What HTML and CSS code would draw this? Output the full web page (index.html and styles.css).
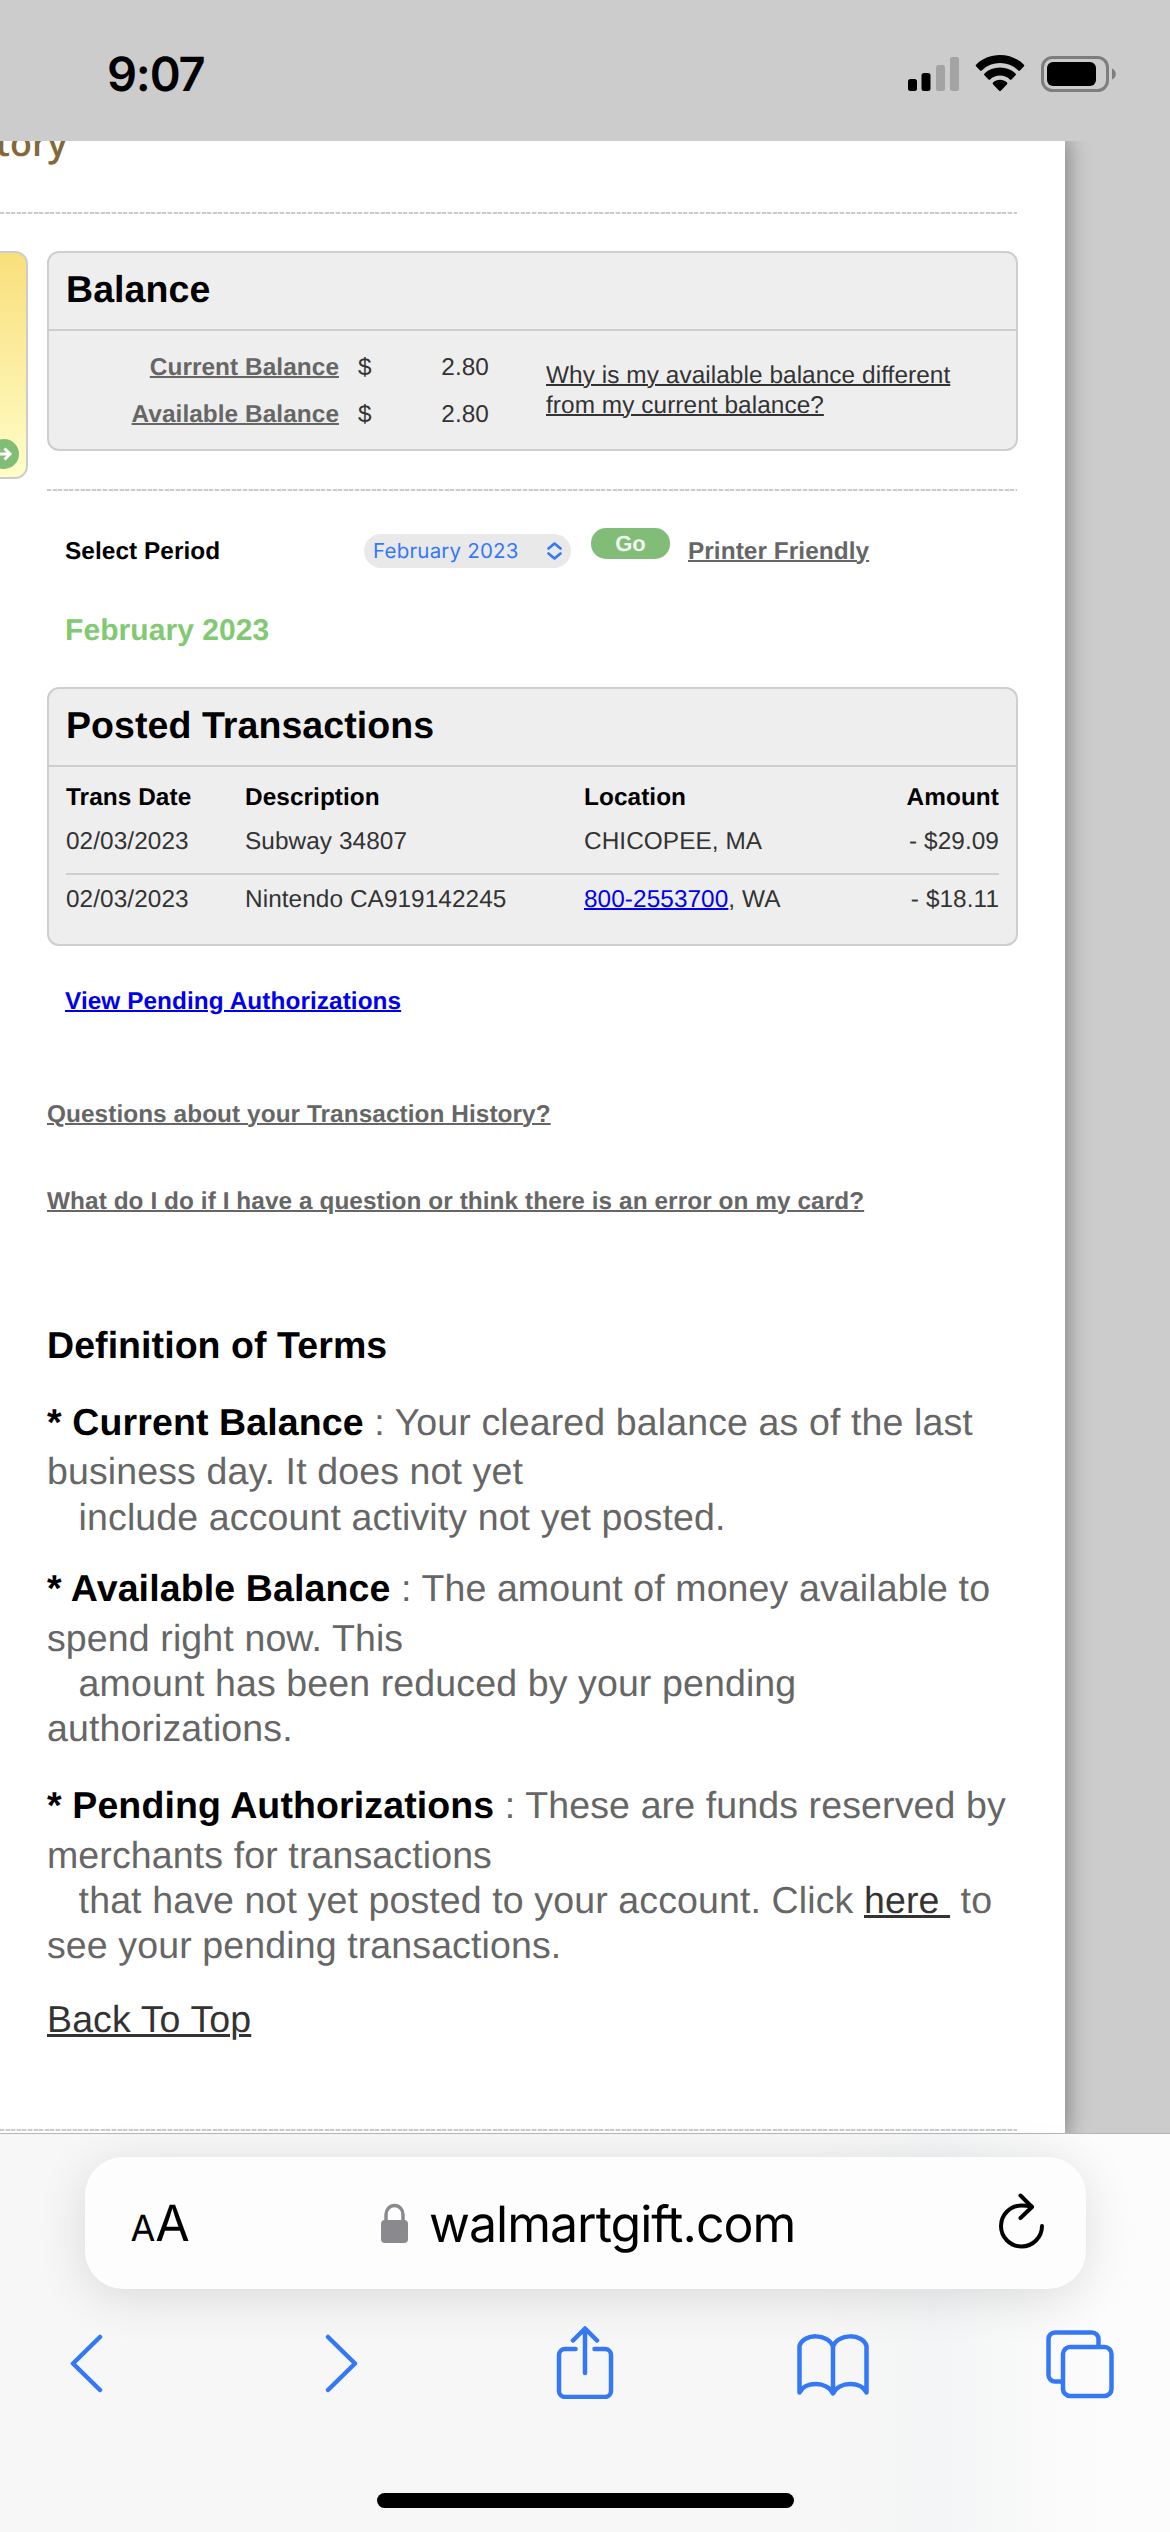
FILE: index.html
```html
<!DOCTYPE html>
<html lang="en">
<head>
    <meta charset="UTF-8">
    <meta name="viewport" content="width=device-width, initial-scale=1.0">
    <title>Transaction History</title>
    <link rel="stylesheet" href="styles.css">
</head>
<body>
    <header class="status-bar">
        <span class="time">9:07</span>
        <svg class="status-icons" width="210" height="40" viewBox="0 0 210 40">
            <rect x="1" y="25" width="9" height="12" rx="2.5"/>
            <rect x="14.500" y="19" width="9" height="18" rx="2.5"/>
            <rect x="29" y="11" width="9" height="26" rx="2.5" fill="#a3a3a3"/>
            <rect x="43" y="3" width="9" height="34" rx="2.5" fill="#a3a3a3"/>
            <path d="M93 1c9.500 0 17.800 3.700 23.700 9.400a1.500 1.500 0 0 1 0 2.200l-3.500 3.600a1.500 1.500 0 0 1-2.200 0a26 26 0 0 0-36 0a1.500 1.500 0 0 1-2.200 0l-3.500-3.600a1.500 1.500 0 0 1 0-2.200C75.200 4.700 83.500 1 93 1z"/>
            <path d="M93 13.500c6 0 11.300 2.200 15.300 5.800a1.500 1.500 0 0 1 0 2.300l-3.600 3.600a1.500 1.500 0 0 1-2.100 0a14.500 14.500 0 0 0-19.200 0a1.500 1.500 0 0 1-2.100 0l-3.600-3.600a1.500 1.500 0 0 1 0-2.300c4-3.600 9.300-5.800 15.300-5.800z"/>
            <path d="M93 25.800c2.600 0 5 .9 6.800 2.500a1.500 1.500 0 0 1 0 2.300l-5.700 5.800a1.500 1.500 0 0 1-2.200 0l-5.700-5.800a1.500 1.500 0 0 1 0-2.300c1.800-1.600 4.200-2.500 6.800-2.500z"/>
            <rect x="135.500" y="3.500" width="65" height="33" rx="10" fill="none" stroke="#7d7d7d" stroke-width="3"/>
            <rect x="140" y="8" width="49" height="24" rx="6"/>
            <path d="M205 14.500c5 2 5 9 0 11z" fill="#7d7d7d"/>
        </svg>
    </header>

    <div class="viewport">
        <div class="page">
            <h1 class="page-title">Transaction History</h1>
            <div class="dotted"></div>
            <div class="columns">
                <div class="side-box">
                    <svg class="side-arrow" width="30" height="30" viewBox="0 0 30 30">
                        <circle cx="15" cy="15" r="15" fill="#82bd78"/>
                        <path d="M6 15h14M15.500 9.500l5.500 5.500l-5.500 5.500" fill="none" stroke="#fff" stroke-width="3"/>
                    </svg>
                </div>
                <main class="content">
                    <section class="card">
                        <h2 class="card-title">Balance</h2>
                        <div class="balance">
                            <div class="balance-grid">
                                <a class="label" href="#">Current Balance</a><span>$</span><span class="right">2.80</span>
                                <a class="label" href="#">Available Balance</a><span>$</span><span class="right">2.80</span>
                            </div>
                            <a class="why" href="#">Why is my available balance different<br>from my current balance?</a>
                        </div>
                    </section>

                    <div class="dotted filter-line"></div>

                    <div class="filter">
                        <span class="filter-label">Select Period</span>
                        <div class="select">
                            <span class="select-text">February 2023</span>
                            <svg width="15" height="20" viewBox="0 0 15 20">
                                <path d="M1.500 7.500l6-5l6 5M1.500 12.500l6 5l6-5" fill="none" stroke="#3478f6" stroke-width="2.600" stroke-linecap="round" stroke-linejoin="round"/>
                            </svg>
                        </div>
                        <div class="go">Go</div>
                        <a class="label printer" href="#">Printer Friendly</a>
                    </div>

                    <h3 class="month">February 2023</h3>

                    <section class="card">
                        <h2 class="card-title">Posted Transactions</h2>
                        <div class="trans">
                            <div class="trans-row trans-head">
                                <span>Trans Date</span><span>Description</span><span>Location</span><span class="right">Amount</span>
                            </div>
                            <div class="trans-row">
                                <span>02/03/2023</span><span>Subway 34807</span><span>CHICOPEE, MA</span><span class="right">- $29.09</span>
                            </div>
                            <div class="trans-row trans-last">
                                <span>02/03/2023</span><span>Nintendo CA919142245</span><span><a class="phone" href="#">800-2553700</a>, WA</span><span class="right">- $18.11</span>
                            </div>
                        </div>
                    </section>

                    <a class="pending" href="#">View Pending Authorizations</a>
                    <a class="label question" href="#">Questions about your Transaction History?</a>
                    <a class="label error-link" href="#">What do I do if I have a question or think there is an error on my card?</a>

                    <h2 class="terms-title">Definition of Terms</h2>
                    <p class="term"><strong>* Current Balance</strong> : Your cleared balance as of the last<br>business day. It does not yet<br>&nbsp;&nbsp; include account activity not yet posted.</p>
                    <p class="term"><strong>* Available Balance</strong> : The amount of money available to<br>spend right now. This<br>&nbsp;&nbsp; amount has been reduced by your pending<br>authorizations.</p>
                    <p class="term term-pending"><strong>* Pending Authorizations</strong> : These are funds reserved by<br>merchants for transactions<br>&nbsp;&nbsp; that have not yet posted to your account. Click <a href="#">here&nbsp;</a> to<br>see your pending transactions.</p>
                    <a class="top-link" href="#">Back To Top</a>
                </main>
            </div>
            <div class="dotted"></div>
        </div>
    </div>

    <footer class="browser-bar">
        <div class="url-box">
            <span class="text-size"><small>A</small>A</span>
            <div class="url">
                <svg width="27" height="40" viewBox="0 0 27 40">
                    <rect x="0" y="17" width="27" height="23" rx="4" fill="#8a8a8e"/>
                    <path d="M5 18v-6.500a8.500 9 0 0 1 17 0V18" fill="none" stroke="#8a8a8e" stroke-width="3.500"/>
                </svg>
                <span class="host">walmartgift.com</span>
            </div>
            <svg class="reload" width="46" height="56" viewBox="0 0 46 56">
                <path d="M43 33A20.500 20.500 0 1 1 22.500 12.500q5.500 0 10 1" fill="none" stroke="#000" stroke-width="4" stroke-linecap="round"/>
                <path d="M21.500 2.500l11.500 11.500l-11.500 11" fill="none" stroke="#000" stroke-width="4" stroke-linecap="round" stroke-linejoin="round"/>
            </svg>
        </div>
        <nav class="tools">
            <svg class="back" width="34" height="74" viewBox="0 0 34 74"><path d="M31 12L4 38.500L31 65"/></svg>
            <svg class="forward" width="34" height="74" viewBox="0 0 34 74"><path d="M3 12l27 26.500L3 65"/></svg>
            <svg class="share" width="58" height="74" viewBox="0 0 58 74">
                <path d="M19.500 24H9a6 6 0 0 0-6 6v36a6 6 0 0 0 6 6h40a6 6 0 0 0 6-6V30a6 6 0 0 0-6-6H38.500M29 48V4M17 15.500L29 3.500l12 12"/>
            </svg>
            <svg class="book" width="74" height="74" viewBox="0 0 74 74">
                <path d="M37 22C33 8 7 8 3.500 21V67.500C9 56 31 56 37 68.500C43 56 65 56 70.500 67.500V21C67 8 41 8 37 22zM37 22V68"/>
            </svg>
            <svg class="tabs" width="68" height="74" viewBox="0 0 68 74">
                <path d="M16 56.500H9a6.500 6.500 0 0 1-6.500-6.500V14A6.500 6.500 0 0 1 9 7.500h37a6.500 6.500 0 0 1 6.500 6.500v7"/>
                <rect x="17" y="22" width="48.500" height="49" rx="7"/>
            </svg>
        </nav>
        <div class="home-bar"></div>
    </footer>
</body>
</html>
```
FILE: styles.css
```css
body {
    font-family: "Liberation Sans", Arial, sans-serif;
    font-size: 24.375px;
    line-height: 30px;
    letter-spacing: 0.07px;
    text-rendering: geometricPrecision;
    margin: 0;
    height: 2532px;
    background-color: #cccccc;
    color: #333;
    display: flex;
    flex-direction: column;
    overflow: hidden;
}

h1, h2, h3, p {
    margin: 0;
}

a {
    color: #333;
    text-decoration-thickness: 2px;
}

/* Status bar */
.status-bar {
    height: 141px;
    flex: none;
    display: flex;
    justify-content: space-between;
    align-items: flex-start;
    padding: 0 53px 0 107px;
    box-sizing: border-box;
}

.time {
    font-family: Inter, sans-serif;
    font-weight: 600;
    font-size: 47px;
    line-height: 60px;
    margin-top: 45px;
    letter-spacing: -1.2px;
    color: #000;
}

.status-icons {
    margin-top: 54px;
}

/* Page */
.viewport {
    height: 1992px;
    flex: none;
    overflow: hidden;
}

.page {
    width: 1064.5px;
    height: 1992px;
    background: white;
    box-shadow: 0 0 20px 3px rgba(0, 0, 0, 0.36);
    display: flex;
    flex-direction: column;
}

.page-title {
    font-family: "Open Sans", sans-serif;
    font-size: 36px;
    font-weight: 600;
    line-height: 36px;
    width: 67px;
    height: 36px;
    margin-top: -16px;
    display: flex;
    justify-content: flex-end;
    white-space: nowrap;
    color: #84683a;
}

.dotted {
    width: 1017px;
    height: 2px;
    flex: none;
    background: repeating-linear-gradient(90deg, #cbcbcb 0 4px, #f0f0f0 4px 5.6px);
}

.page-title + .dotted {
    margin-top: 51px;
}

.columns {
    display: flex;
    height: 1915px;
    flex: none;
}

.side-box {
    width: 28px;
    height: 228px;
    box-sizing: border-box;
    margin: 37px 19px 0 0;
    border: 2px solid #cccccc;
    border-left: none;
    border-radius: 0 13px 13px 0;
    background: linear-gradient(#f9df7b, #fffdc8);
    display: flex;
    align-items: flex-end;
    justify-content: flex-end;
}

.side-arrow {
    flex: none;
    margin: 0 7px 8px 0;
}

.content {
    width: 971px;
    padding-top: 37px;
    display: flex;
    flex-direction: column;
    align-items: flex-start;
}

.card {
    width: 971px;
    box-sizing: border-box;
    border: 2px solid #cecece;
    border-radius: 12px;
    background: #eeeeee;
}

.card-title {
    font-size: 37.5px;
    line-height: 45px;
    height: 62px;
    padding: 14px 17px 0;
    border-bottom: 2px solid #cecece;
    color: #000;
}

.label {
    color: #666;
    font-weight: bold;
}

.right {
    text-align: right;
}

.balance {
    display: flex;
    height: 118px;
}

.balance-grid {
    display: grid;
    grid-template-columns: 290px 14px 98px;
    column-gap: 19px;
    row-gap: 17px;
    grid-auto-rows: 30px;
    padding-top: 22px;
}

.balance-grid .label {
    text-align: right;
}

.why {
    margin: 30px 0 0 57px;
}

.filter-line {
    width: 970px;
    margin-top: 38px;
}

.filter {
    display: flex;
    align-items: flex-start;
    height: 40px;
    margin-top: 37px;
    padding-left: 18px;
}

.filter-label {
    width: 299px;
    margin-top: 9px;
    font-weight: bold;
    color: #000;
}

.select {
    width: 207px;
    height: 34px;
    box-sizing: border-box;
    margin-top: 6px;
    padding: 0 9px;
    border-radius: 17px;
    background: #e9e9ea;
    display: flex;
    align-items: center;
    justify-content: space-between;
}

.select-text {
    font-family: Inter, sans-serif;
    font-size: 20.5px;
    letter-spacing: 0.2px;
    color: #3478f6;
}

.go {
    width: 79px;
    height: 31px;
    margin: 0 18px 0 20px;
    border-radius: 15px;
    background: #82bd78;
    color: #f0f9ee;
    font-size: 22px;
    line-height: 31px;
    font-weight: bold;
    text-align: center;
}

.printer {
    margin-top: 9px;
}

.month {
    font-size: 30px;
    line-height: 36px;
    margin: 45px 0 38px 18px;
    color: #82c974;
}

.trans {
    padding: 16px 17px 29px;
}

.trans-row {
    display: grid;
    grid-template-columns: 179px 339px 1fr 140px;
}

.trans-head {
    font-weight: bold;
    color: #000;
    margin-bottom: 14px;
}

.trans-last {
    margin-top: 16px;
    padding-top: 10px;
    border-top: 2px solid #cecece;
}

.phone, .pending {
    color: #0000ee;
}

.pending {
    margin: 41px 0 0 18px;
    font-weight: bold;
}

.question {
    margin-top: 83px;
}

.error-link {
    margin-top: 57px;
}

/* Definitions */
.terms-title {
    font-size: 37.5px;
    line-height: 45px;
    margin-top: 106px;
    color: #000;
}

.term {
    font-size: 37.5px;
    line-height: 45.2px;
    letter-spacing: 0.12px;
    margin-top: 22.6px;
    color: #666;
    white-space: nowrap;
}

.terms-title + .term {
    margin-top: 28px;
}

.term strong {
    line-height: 53.4px;
    color: #000;
}

.term-pending {
    margin-top: 28px;
}

.top-link {
    font-size: 37.5px;
    line-height: 45px;
    letter-spacing: 0.12px;
    margin-top: 29px;
}

.term a, .top-link {
    text-decoration-thickness: 3px;
}

/* Browser bar */
.browser-bar {
    height: 399px;
    flex: none;
    box-sizing: border-box;
    border-top: 1px solid #b5b5b5;
    background: linear-gradient(90deg, #f7f7f7 0 70%, #f4f5f6 80%, #fcfcfc 94%);
    display: flex;
    flex-direction: column;
    align-items: center;
}

.url-box {
    width: 1001px;
    height: 132px;
    box-sizing: border-box;
    margin-top: 23px;
    padding: 0 40px 0 46px;
    border-radius: 38px;
    background: #fdfdfd;
    box-shadow: 0 8px 50px rgba(0, 0, 0, 0.12);
    display: flex;
    align-items: center;
    justify-content: space-between;
    font-family: Inter, sans-serif;
    color: #000;
}

.text-size {
    font-size: 50px;
    line-height: 60px;
    letter-spacing: -2px;
    padding-top: 5px;
}

.text-size small {
    font-size: 36px;
    letter-spacing: 0;
}

.url {
    display: flex;
    align-items: center;
    gap: 21px;
    margin-right: 11px;
}

.host {
    font-size: 50px;
    line-height: 60px;
    letter-spacing: -1px;
    padding-top: 3px;
}

.reload {
    margin-bottom: 4px;
}

.tools {
    width: 1170px;
    height: 74px;
    margin-top: 36px;
    display: flex;
}

.tools svg {
    flex: none;
    fill: none;
    stroke: #3478f6;
    stroke-width: 4.5;
    stroke-linecap: round;
    stroke-linejoin: round;
}

.tools .back {
    margin-left: 69px;
}

.tools .forward {
    margin-left: 222px;
}

.tools .share {
    margin-left: 197px;
}

.tools .book {
    margin-left: 182px;
}

.tools .tabs {
    margin-left: 176px;
}

.home-bar {
    width: 417px;
    height: 15px;
    margin-top: 94px;
    border-radius: 8px;
    background: #000;
}
```
